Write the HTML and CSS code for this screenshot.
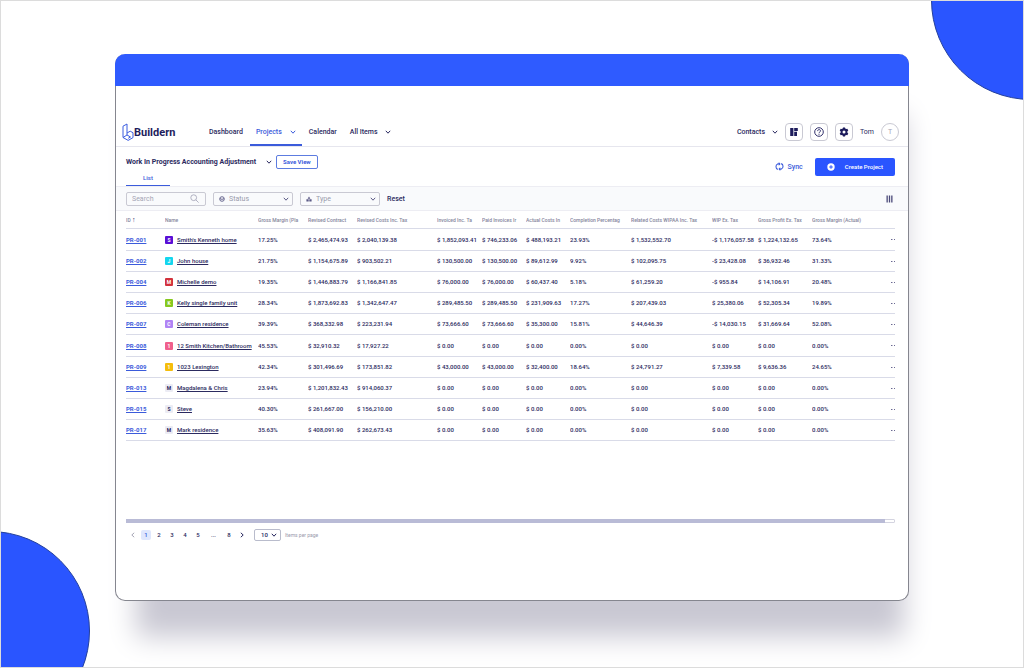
FILE: index.html
```html
<!DOCTYPE html>
<html lang="en">
<head>
<meta charset="utf-8">
<meta name="viewport" content="width=device-width, initial-scale=1">
<title>Buildern – Projects</title>
<link rel="stylesheet" href="styles.css">
</head>
<body>
<svg class="defs" aria-hidden="true">
  <symbol id="chev" viewBox="0 0 6 6"><path d="M.8 1.8 3 4.2 5.2 1.8" fill="none" stroke="currentColor" stroke-width="1"/></symbol>
</svg>
<div class="scene">
  <span class="disc disc-top"></span>
  <span class="disc disc-bottom"></span>
  <div class="window">
    <div class="titlebar"></div>
    <header class="nav">
      <a class="logo" href="#">
        <svg class="logo-mark" viewBox="0 0 12 18" fill="none" stroke="#3b5ce0" stroke-width="1" stroke-linejoin="round"><path d="M5 12V1L1 3.200v11.300l5.200 2.900 4.800-2.800V9.700L8.200 8.200 5 10M1 14.500 5 12l3.500 2-2.300 1.300"/></svg>
        <span>Buildern</span>
      </a>
      <nav class="menu">
        <a href="#">Dashboard</a>
        <a href="#" class="active">Projects <svg class="chev"><use href="#chev"/></svg></a>
        <a href="#">Calendar</a>
        <a href="#">All Items <svg class="chev"><use href="#chev"/></svg></a>
      </nav>
      <div class="tools">
        <a href="#" class="contacts">Contacts <svg class="chev"><use href="#chev"/></svg></a>
        <button class="tool" aria-label="Boards"><svg viewBox="0 0 10 10" fill="#1d1c5c"><path d="M1.200 1h3.200v8H1.200zM5.200 1h3.600v3H5.200zM5.200 4.800h2.800V9H5.200z"/></svg></button>
        <button class="tool" aria-label="Help"><svg viewBox="0 0 10 10" fill="none" stroke="#1d1c5c" stroke-width=".9"><circle cx="5" cy="5" r="4.3"/><path d="M3.6 4.1c0-2 2.9-1.9 2.9-.2C6.500 5 5 5 5 6.200M5 6.900v.9"/></svg></button>
        <button class="tool" aria-label="Settings"><svg viewBox="0 0 10 10"><path fill="#1d1c5c" fill-rule="evenodd" d="M4 .4h2l.3 1.200.8.5 1.200-.4 1 1.700-.9.900v1.400l.9.900-1 1.700-1.200-.4-.8.500L6 9.600H4l-.3-1.200-.8-.5-1.200.4-1-1.700.9-.900V4.300L.7 3.400l1-1.700 1.200.4.8-.5zM5 3.500A1.500 1.500 0 1 0 5 6.500 1.500 1.500 0 0 0 5 3.500Z"/></svg></button>
        <span class="user">Tom</span>
        <span class="avatar">T</span>
      </div>
    </header>
    <section class="viewbar">
      <div>
        <div class="view-line">
          <button class="view-name">Work In Progress Accounting Adjustment <svg class="chev"><use href="#chev"/></svg></button>
          <button class="save">Save View</button>
        </div>
        <a class="tab" href="#">List</a>
      </div>
      <div class="actions">
        <button class="sync"><svg viewBox="0 0 10 10" fill="none" stroke="currentColor" stroke-width="1.200"><path d="M3.200 8.200C.4 7.500.4 3 3 2.100h2M6.800 1.800c2.800.7 2.800 5.200.2 6.100H5"/><path fill="currentColor" stroke="none" d="M4.200 0v4.200L6.200 2.100zM5.800 5.800V10L3.800 7.900z"/></svg>Sync</button>
        <button class="create"><svg viewBox="0 0 8 8"><circle cx="4" cy="4" r="3.700" fill="#fff"/><path d="M4 2.200v3.600M2.200 4h3.600" stroke="#2a55ff" stroke-width="1"/></svg>Create Project</button>
      </div>
    </section>
    <section class="filters">
      <label class="field"><input type="text" placeholder="Search" aria-label="Search"><svg class="glass" viewBox="0 0 9 9" fill="none" stroke="#a9a9bb" stroke-width=".9"><circle cx="3.700" cy="3.700" r="2.900"/><path d="m5.900 5.900 2.700 2.700"/></svg></label>
      <label class="field"><svg class="lead" viewBox="0 0 6 6" fill="none" stroke="#5b5a86" stroke-width=".9"><circle cx="3" cy="3" r="2.300"/><path d="M1 2.600 3 3.400l2-.8"/></svg><select aria-label="Status"><option>Status</option></select><svg class="chev"><use href="#chev"/></svg></label>
      <label class="field"><svg class="lead" viewBox="0 0 6 6" fill="#5b5a86"><path d="M3 .4 4.400 2.800H1.600zM.4 3.300h2.300v2.200H.4zM3.300 3.300h2.300v2.200H3.300z"/></svg><select aria-label="Type"><option>Type</option></select><svg class="chev"><use href="#chev"/></svg></label>
      <button class="reset">Reset</button>
      <button class="columns" aria-label="Columns"><svg viewBox="0 0 7 8" fill="#4a4978"><path d="M.5.500h1.300v7H.5zM2.850.500h1.300v7h-1.300zM5.200.500h1.300v7H5.200z"/></svg></button>
    </section>
    <main class="content">
      <table class="grid">
        <colgroup><col class="c-id"><col class="c-name"><col class="c-50"><col class="c-49"><col class="c-80"><col class="c-45"><col class="c-44"><col class="c-44"><col class="c-61"><col class="c-81"><col class="c-46"><col class="c-54"><col class="c-75"><col class="c-8"></colgroup>
        <thead><tr><th>ID <b class="sort">↑</b></th><th>Name</th><th>Gross Margin (Pla</th><th>Revised Contract</th><th>Revised Costs Inc. Tax</th><th>Invoiced Inc. Ta</th><th>Paid Invoices Ir</th><th>Actual Costs In</th><th>Completion Percentag</th><th>Related Costs WIPAA Inc. Tax</th><th>WIP Ex. Tax</th><th>Gross Profit Ex. Tax</th><th>Gross Margin (Actual)</th><th></th></tr></thead>
        <tbody>
<tr><td><a href="#">PR-001</a></td><td><i class="chip violet">S</i><a href="#">Smith's Kenneth home</a></td><td>17.25%</td><td>$ 2,465,474.93</td><td>$ 2,040,139.38</td><td>$ 1,852,093.41</td><td>$ 746,233.06</td><td>$ 488,193.21</td><td>23.93%</td><td>$ 1,532,552.70</td><td>-$ 1,176,057.58</td><td>$ 1,224,132.65</td><td>73.64%</td><td><button class="more" aria-label="More"></button></td></tr>
<tr><td><a href="#">PR-002</a></td><td><i class="chip cyan">J</i><a href="#">John house</a></td><td>21.75%</td><td>$ 1,154,675.89</td><td>$ 903,502.21</td><td>$ 130,500.00</td><td>$ 130,500.00</td><td>$ 89,612.99</td><td>9.92%</td><td>$ 102,095.75</td><td>-$ 23,428.08</td><td>$ 36,932.46</td><td>31.33%</td><td><button class="more" aria-label="More"></button></td></tr>
<tr><td><a href="#">PR-004</a></td><td><i class="chip red">M</i><a href="#">Michelle demo</a></td><td>19.35%</td><td>$ 1,446,883.79</td><td>$ 1,166,841.85</td><td>$ 76,000.00</td><td>$ 76,000.00</td><td>$ 60,437.40</td><td>5.18%</td><td>$ 61,259.20</td><td>-$ 955.84</td><td>$ 14,106.91</td><td>20.48%</td><td><button class="more" aria-label="More"></button></td></tr>
<tr><td><a href="#">PR-006</a></td><td><i class="chip green">K</i><a href="#">Kelly single family unit</a></td><td>28.34%</td><td>$ 1,873,692.83</td><td>$ 1,342,647.47</td><td>$ 289,485.50</td><td>$ 289,485.50</td><td>$ 231,909.63</td><td>17.27%</td><td>$ 207,439.03</td><td>$ 25,380.06</td><td>$ 52,305.34</td><td>19.89%</td><td><button class="more" aria-label="More"></button></td></tr>
<tr><td><a href="#">PR-007</a></td><td><i class="chip lilac">C</i><a href="#">Coleman residence</a></td><td>39.39%</td><td>$ 368,332.98</td><td>$ 223,231.94</td><td>$ 73,666.60</td><td>$ 73,666.60</td><td>$ 35,300.00</td><td>15.81%</td><td>$ 44,646.39</td><td>-$ 14,030.15</td><td>$ 31,669.64</td><td>52.08%</td><td><button class="more" aria-label="More"></button></td></tr>
<tr><td><a href="#">PR-008</a></td><td><i class="chip pink">1</i><a href="#">12 Smith Kitchen/Bathroom</a></td><td>45.53%</td><td>$ 32,910.32</td><td>$ 17,927.22</td><td>$ 0.00</td><td>$ 0.00</td><td>$ 0.00</td><td>0.00%</td><td>$ 0.00</td><td>$ 0.00</td><td>$ 0.00</td><td>0.00%</td><td><button class="more" aria-label="More"></button></td></tr>
<tr><td><a href="#">PR-009</a></td><td><i class="chip amber">1</i><a href="#">1023 Lexington</a></td><td>42.34%</td><td>$ 301,496.69</td><td>$ 173,851.82</td><td>$ 43,000.00</td><td>$ 43,000.00</td><td>$ 32,400.00</td><td>18.64%</td><td>$ 24,791.27</td><td>$ 7,339.58</td><td>$ 9,636.36</td><td>24.65%</td><td><button class="more" aria-label="More"></button></td></tr>
<tr><td><a href="#">PR-013</a></td><td><i class="chip">M</i><a href="#">Magdalena &amp; Chris</a></td><td>23.94%</td><td>$ 1,201,832.43</td><td>$ 914,060.37</td><td>$ 0.00</td><td>$ 0.00</td><td>$ 0.00</td><td>0.00%</td><td>$ 0.00</td><td>$ 0.00</td><td>$ 0.00</td><td>0.00%</td><td><button class="more" aria-label="More"></button></td></tr>
<tr><td><a href="#">PR-015</a></td><td><i class="chip">S</i><a href="#">Steve</a></td><td>40.30%</td><td>$ 261,667.00</td><td>$ 156,210.00</td><td>$ 0.00</td><td>$ 0.00</td><td>$ 0.00</td><td>0.00%</td><td>$ 0.00</td><td>$ 0.00</td><td>$ 0.00</td><td>0.00%</td><td><button class="more" aria-label="More"></button></td></tr>
<tr><td><a href="#">PR-017</a></td><td><i class="chip">M</i><a href="#">Mark residence</a></td><td>35.63%</td><td>$ 408,091.90</td><td>$ 262,673.43</td><td>$ 0.00</td><td>$ 0.00</td><td>$ 0.00</td><td>0.00%</td><td>$ 0.00</td><td>$ 0.00</td><td>$ 0.00</td><td>0.00%</td><td><button class="more" aria-label="More"></button></td></tr>
        </tbody>
      </table>
      <div class="scrollbar"><span></span></div>
    </main>
    <footer class="pager">
      <button class="page off" aria-label="Previous"><svg class="chev left"><use href="#chev"/></svg></button>
      <button class="page on">1</button><button class="page">2</button><button class="page">3</button><button class="page">4</button><button class="page">5</button><span class="page gap">...</span><button class="page">8</button>
      <button class="page" aria-label="Next"><svg class="chev right"><use href="#chev"/></svg></button>
      <label class="size"><span class="size-box"><select><option>10</option></select><svg class="chev"><use href="#chev"/></svg></span>Items per page</label>
    </footer>
  </div>
</div>
</body>
</html>
```
FILE: styles.css
```css
* { box-sizing: border-box; }
body {
  margin: 0;
  background: #fff;
  color: #2b2a60;
  font: 500 7px/10px Roboto, "Liberation Sans", sans-serif;
}
a { color: inherit; text-decoration: none; }
button, input, select {
  margin: 0; padding: 0; border: 0;
  background: none; color: inherit; font: inherit;
  appearance: none; outline: 0;
}
button { cursor: pointer; white-space: nowrap; }
svg { display: block; flex: none; }
.defs { position: absolute; width: 0; height: 0; }
.chev { width: 6px; height: 6px; }

.scene {
  position: relative;
  display: flex;
  min-height: 100vh;
  padding: 53px 114px 66px;
  overflow: hidden;
  border: 1px solid #dcdcdc;
}
.disc {
  position: absolute;
  width: 200px; height: 200px;
  border: 1px solid #24409c;
  border-radius: 50%;
  background: #2a55ff;
}
.disc-top { top: -101px; right: -108px; }
.disc-bottom { left: -111px; bottom: -64px; }

.window {
  position: relative;
  flex: 1;
  min-width: 0;
  display: flex;
  flex-direction: column;
  border: 1px solid #85868f;
  border-top: 0;
  border-radius: 10px;
  background: #fff;
  box-shadow: 8px 49px 26px -13px #c9c8d3;
}
.titlebar {
  height: 32px;
  margin: 0 -1px;
  border-radius: 10px 10px 0 0;
  background: #2f5bff;
}

.nav {
  display: flex;
  align-items: stretch;
  height: 30px;
  margin-top: 31px;
  padding: 0 9px 0 6px;
  border-bottom: 1px solid #e6e6ee;
}
.logo {
  display: flex;
  align-items: center;
  width: 81px;
  color: #1d1c5c;
  font-size: 11px;
  font-weight: 700;
}
.logo span { padding-top: 3px; }
.logo-mark { width: 12px; height: 18px; }
.menu { display: flex; gap: 1px; }
.menu a {
  display: flex;
  align-items: center;
  gap: 8px;
  padding: 2px 6px 0;
  border-bottom: 2px solid transparent;
  white-space: nowrap;
}
.menu .active { color: #3b5bdb; border-color: #3b5bdb; }
.tools { display: flex; align-items: center; gap: 7px; margin-left: auto; }
.contacts { display: flex; align-items: center; gap: 7px; }
.tool {
  display: grid;
  place-items: center;
  width: 18px; height: 18px;
  border: 1px solid #c9c9d3;
  border-radius: 4px;
}
.tool svg { width: 10px; height: 10px; }
.user { font-weight: 400; }
.avatar {
  display: grid;
  place-items: center;
  width: 18px; height: 18px;
  border: 1px solid #c9c9d3;
  border-radius: 50%;
  color: #a5a5b5;
  font-weight: 400;
}

.viewbar {
  display: flex;
  justify-content: space-between;
  align-items: center;
  height: 39px;
  padding: 0 13px 0 10px;
}
.view-line { display: flex; align-items: center; gap: 4px; height: 14px; margin-top: 8px; }
.view-name { display: flex; align-items: center; gap: 10px; font-weight: 700; }
.save {
  height: 14px;
  padding: 0 6px;
  border: 1px solid #5d7ce0;
  border-radius: 2px;
  color: #3b5bdb;
  font-size: 6px;
  font-weight: 700;
}
.tab {
  display: block;
  width: 44px;
  height: 14px;
  margin-top: 3px;
  padding-top: 1px;
  border-bottom: 1px solid #3b5bdb;
  color: #3b5bdb;
  font-size: 6px;
  text-align: center;
}
.actions { display: flex; align-items: center; gap: 12px; }
.sync { display: flex; align-items: center; gap: 4px; color: #3b5bdb; }
.sync svg { width: 9px; height: 9px; }
.create {
  display: flex;
  align-items: center;
  gap: 10px;
  height: 18px;
  padding: 0 12px;
  border-radius: 2px;
  background: #2a55ff;
  color: #fff;
  font-size: 6px;
}
.create svg { width: 8px; height: 8px; }

.filters {
  display: flex;
  align-items: center;
  gap: 7px;
  height: 25px;
  padding: 0 15px 0 10px;
  border-top: 1px solid #ededf3;
  border-bottom: 1px solid #ededf3;
  background: #f9fafc;
}
.field {
  display: flex;
  align-items: center;
  gap: 4px;
  width: 80px;
  height: 14px;
  padding: 0 3px 0 5px;
  border: 1px solid #c9c9d3;
  border-radius: 2px;
  color: #9a9aac;
  font-weight: 400;
}
.field input, .field select { flex: 1; min-width: 0; width: 0; height: 12px; }
.field input::placeholder { color: #a5a5b5; opacity: 1; }
.field .chev { color: #5b5a86; }
.glass { width: 9px; height: 9px; margin-right: 3px; }
.lead { width: 6px; height: 6px; }
.columns { margin-left: auto; }
.columns svg { width: 7px; height: 8px; }

.content { flex: 1; display: flex; flex-direction: column; padding: 0 13px 0 10px; }
.grid {
  width: 100%;
  table-layout: fixed;
  border-collapse: separate;
  border-spacing: 0;
  font-size: 6px;
}
.grid th, .grid td {
  height: 21px;
  padding: 0;
  border-bottom: 1px solid #d9dbe8;
  overflow: hidden;
  text-align: left;
  white-space: nowrap;
}
.grid th { height: 18px; color: #85859c; font-size: 5px; font-weight: 500; }
.grid tr:nth-child(5n+1) td { height: 22px; }
.grid a { text-decoration: underline; }
.grid td:first-child a { color: #3b5bdb; font-weight: 700; }
.sort { color: #24235c; font-size: 7px; }
.c-id { width: 39px; } .c-name { width: 93px; } .c-50 { width: 50px; }
.c-49 { width: 49px; } .c-80 { width: 80px; } .c-45 { width: 45px; }
.c-44 { width: 44px; } .c-61 { width: 61px; } .c-81 { width: 81px; }
.c-46 { width: 46px; } .c-54 { width: 54px; } .c-75 { width: 75px; } .c-8 { width: 8px; }
.chip {
  display: inline-block;
  width: 8px; height: 8px;
  margin-right: 4px;
  border-radius: 1px;
  background: #ececf4;
  font: 700 5px/8px Roboto, sans-serif;
  text-align: center;
  vertical-align: middle;
}
.violet, .cyan, .red, .green, .lilac, .pink, .amber { color: #fff; }
.violet { background: #5a0fd6; }
.cyan { background: #14d6ee; }
.red { background: #d2323c; }
.green { background: #86c81e; }
.lilac { background: #b184f5; }
.pink { background: #f0608c; }
.amber { background: #f5bd0c; }
.more {
  display: block;
  width: 4px; height: 1px;
  margin-left: auto;
  border: solid #6a6992;
  border-width: 0 1px;
  box-shadow: inset 1px 0 #b9b8cc;
}
.scrollbar {
  height: 4px;
  margin-top: auto;
  border: 1px solid #d4d4e0;
  border-radius: 1px;
}
.scrollbar span { display: block; width: 99%; height: 4px; margin: -1px; background: #b9bbd6; }

.pager {
  display: flex;
  align-items: center;
  gap: 3px;
  height: 12px;
  margin: 6px 0 59px;
  padding-left: 12px;
  font-size: 6px;
}
.page { display: grid; place-items: center; width: 10px; height: 10px; border-radius: 2px; }
.off { color: #a5a5b5; }
.on { background: #dfe7fd; color: #3b5bdb; }
.gap { width: 15px; }
.left { transform: rotate(90deg); }
.right { transform: rotate(-90deg); }
.size { display: flex; align-items: center; gap: 4px; margin-left: 4px; color: #9a9aac; font-size: 5px; font-weight: 400; }
.size-box {
  display: flex;
  align-items: center;
  width: 27px;
  height: 12px;
  padding: 0 3px 0 6px;
  border: 1px solid #b9bccc;
  border-radius: 2px;
  color: #24235c;
}
.size-box select { flex: 1; min-width: 0; width: 0; font-size: 6px; font-weight: 500; }
```
